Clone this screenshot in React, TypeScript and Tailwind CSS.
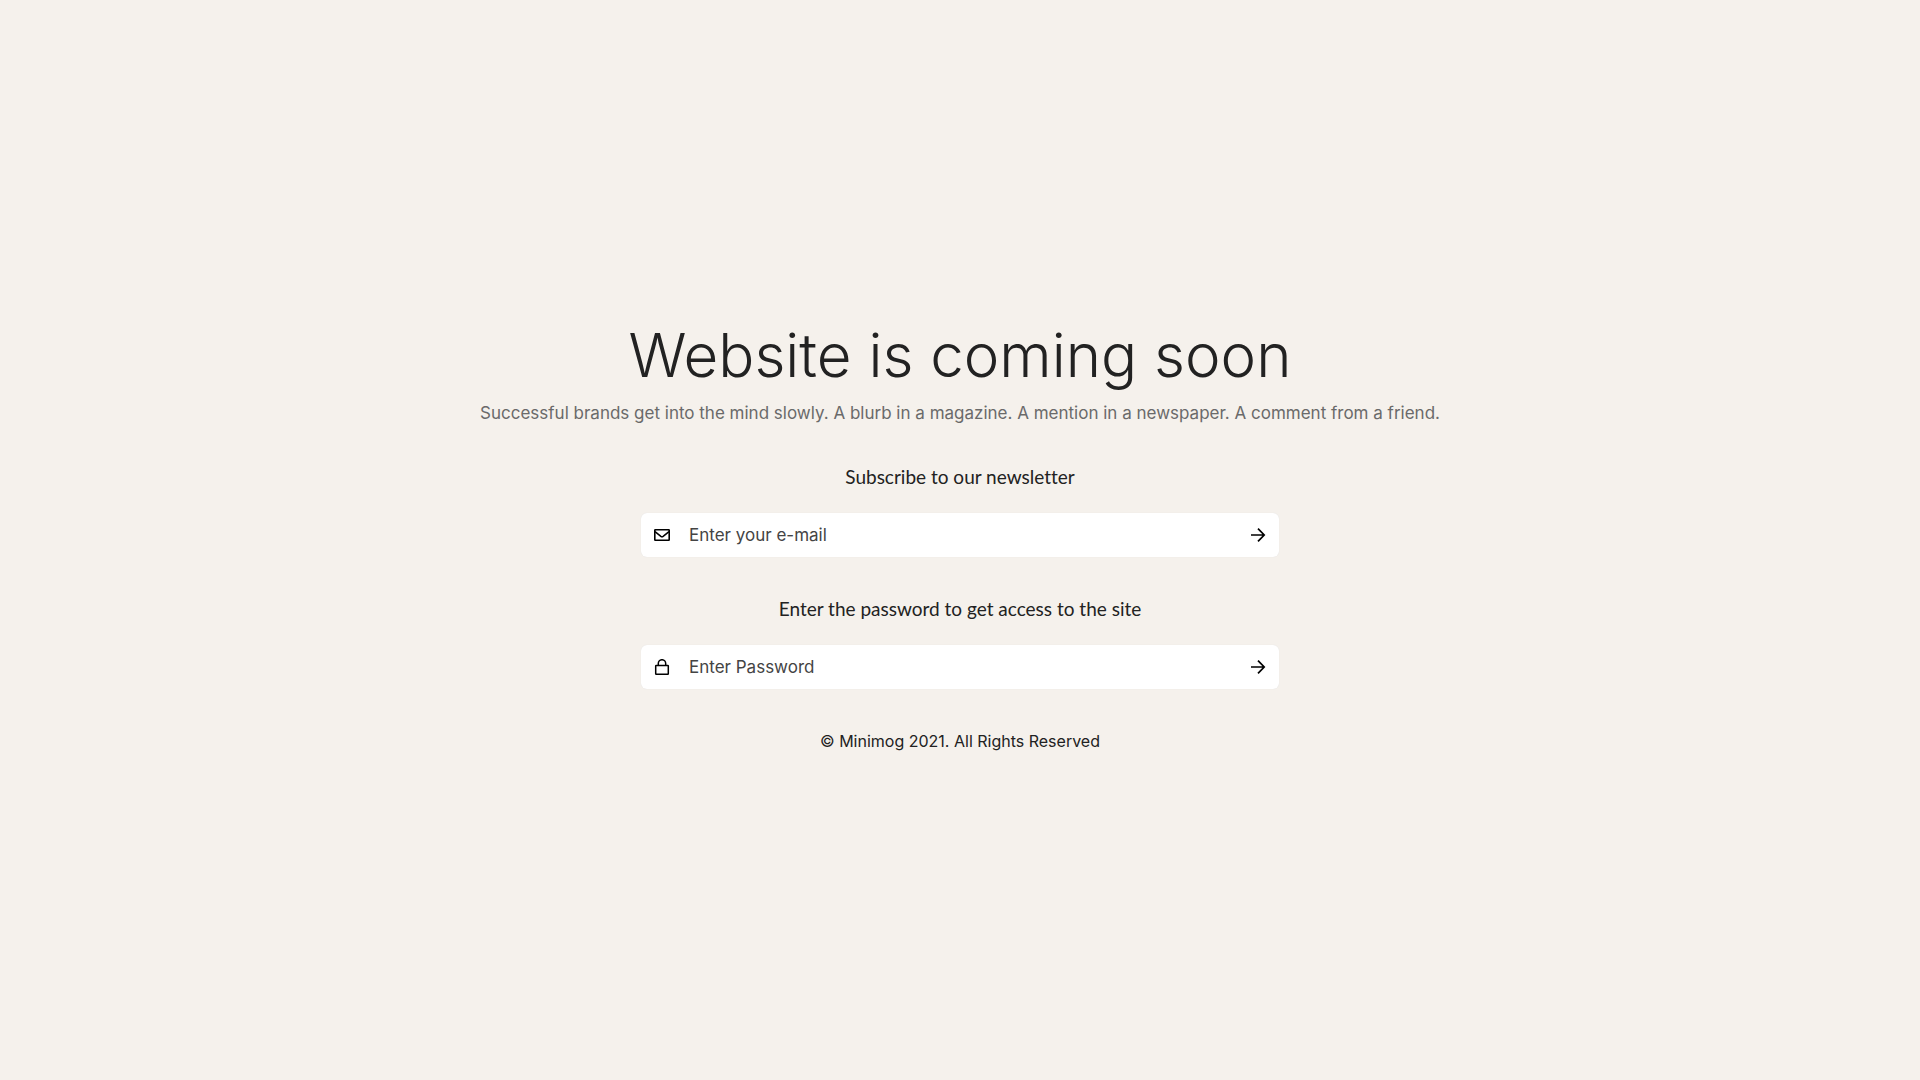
import type { ReactNode } from "react";

function MailIcon() {
  return (
    <svg aria-hidden="true" className="h-4 w-4" viewBox="0 0 16 16" fill="none" stroke="currentColor" strokeWidth="1.6" strokeLinejoin="round">
      <rect x="0.8" y="2.8" width="14.4" height="10.4" rx="0.5" />
      <path d="M1 4.7 6.9 9.3q1.1.8 2.2 0L15 4.7" />
    </svg>
  );
}

function LockIcon() {
  return (
    <svg aria-hidden="true" className="h-4 w-4" viewBox="0 0 16 16" fill="none" stroke="currentColor" strokeWidth="1.5" strokeLinejoin="round">
      <rect x="1.7" y="6.5" width="12.6" height="8.7" rx="0.5" />
      <path d="M4.3 6.5V4.4a3.7 3.7 0 0 1 7.4 0v2.1" />
    </svg>
  );
}

function ArrowIcon() {
  return (
    <svg aria-hidden="true" className="h-4 w-4" viewBox="0 0 16 16" fill="none" stroke="currentColor" strokeWidth="1.7">
      <path d="M1 8h13M8 1.6 14.2 8 8 14.4" />
    </svg>
  );
}

type FieldProps = {
  id: string;
  type: string;
  title: string;
  placeholder: string;
  action: string;
  icon: ReactNode;
};

function FieldForm({ id, type, title, placeholder, action, icon }: FieldProps) {
  return (
    <form className="flex w-full max-w-[638px] flex-col items-center gap-[22px]" onSubmit={(e) => e.preventDefault()}>
      <label htmlFor={id} className="font-['Lato',sans-serif] text-[19px] leading-7 text-[#222] [font-variant-ligatures:none]">
        {title}
      </label>
      <div className="flex h-11 w-full items-center rounded-md bg-white pl-[13px] text-black shadow-[0_0_1px_#ddd]">
        {icon}
        <input
          id={id}
          type={type}
          placeholder={placeholder}
          className="h-full min-w-0 flex-1 bg-transparent pl-[19px] text-[17px] text-[#444] outline-none placeholder:text-[#444]"
        />
        <button type="submit" aria-label={action} className="flex h-full items-center px-[13px]">
          <ArrowIcon />
        </button>
      </div>
    </form>
  );
}

export default function App() {
  return (
    <main className="flex min-h-screen flex-col items-center justify-center bg-[#f5f1ec] px-4 pb-2 text-center font-['Inter',sans-serif] text-[#222]">
      <h1 className="text-[60px] leading-[72px] font-light">Website is coming soon</h1>
      <p className="mt-2 text-[17px] leading-7 text-[#6a6a6a]">
        Successful brands get into the mind slowly. A blurb in a magazine. A mention in a newspaper. A comment from a friend.
      </p>
      <div className="mt-9 flex w-full flex-col items-center gap-[38px]">
        <FieldForm id="email" type="email" title="Subscribe to our newsletter" placeholder="Enter your e-mail" action="Subscribe" icon={<MailIcon />} />
        <FieldForm id="password" type="password" title="Enter the password to get access to the site" placeholder="Enter Password" action="Enter site" icon={<LockIcon />} />
      </div>
      <footer className="mt-10 text-base leading-6">© Minimog 2021. All Rights Reserved</footer>
    </main>
  );
}
